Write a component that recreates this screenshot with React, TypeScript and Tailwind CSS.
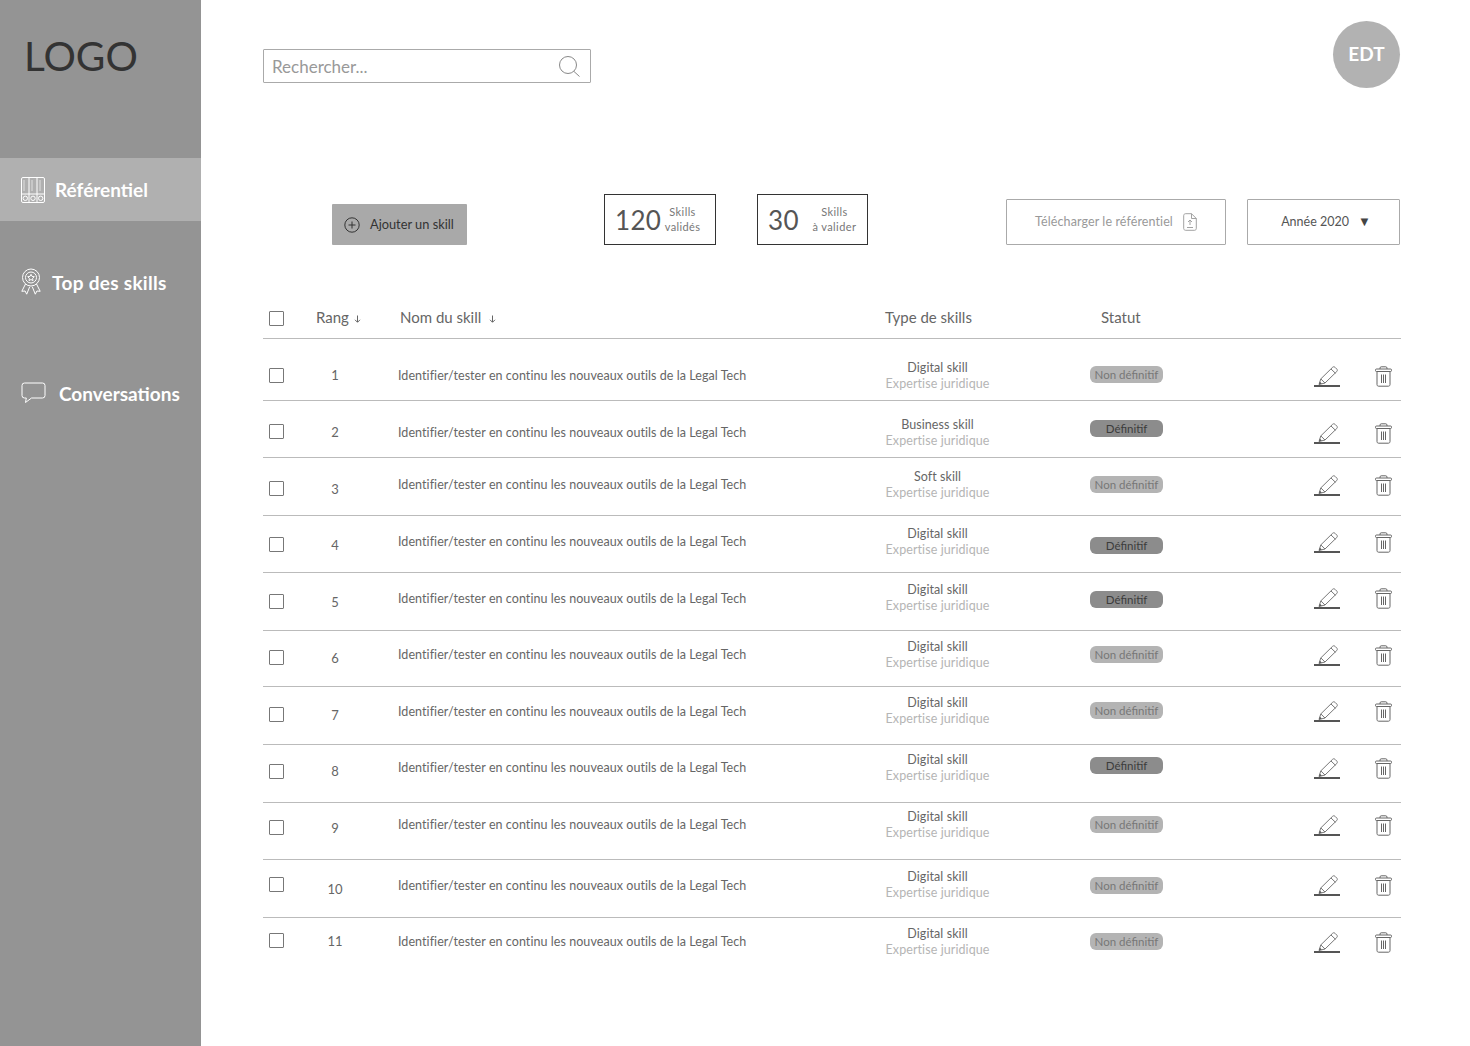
const font = "font-['Lato','Noto_Sans',sans-serif]";

interface Row {
  rank: number;
  height: number;
  check: number;
  rankY: number;
  nameY: number;
  typeY: number;
  pillY: number;
  iconY: number;
  type: string;
  final: boolean;
}

const rows: Row[] = [
  { rank: 1, height: 62, check: 29, rankY: 28, nameY: 29, typeY: 20.5, pillY: 27, iconY: 27, type: "Digital skill", final: false },
  { rank: 2, height: 57, check: 23, rankY: 23, nameY: 24, typeY: 15.5, pillY: 19, iconY: 22, type: "Business skill", final: true },
  { rank: 3, height: 58, check: 23, rankY: 23, nameY: 19, typeY: 10.5, pillY: 18, iconY: 17, type: "Soft skill", final: false },
  { rank: 4, height: 57, check: 21, rankY: 21, nameY: 18, typeY: 9.5, pillY: 21, iconY: 16, type: "Digital skill", final: true },
  { rank: 5, height: 58, check: 21, rankY: 21, nameY: 18, typeY: 8.5, pillY: 18, iconY: 15, type: "Digital skill", final: true },
  { rank: 6, height: 56, check: 19, rankY: 19, nameY: 16, typeY: 7.5, pillY: 15, iconY: 14, type: "Digital skill", final: false },
  { rank: 7, height: 58, check: 20, rankY: 20, nameY: 17, typeY: 7.5, pillY: 15, iconY: 14, type: "Digital skill", final: false },
  { rank: 8, height: 58, check: 19, rankY: 18, nameY: 15, typeY: 6.5, pillY: 12, iconY: 13, type: "Digital skill", final: true },
  { rank: 9, height: 57, check: 17, rankY: 17, nameY: 14, typeY: 5.5, pillY: 13, iconY: 12, type: "Digital skill", final: false },
  { rank: 10, height: 58, check: 17, rankY: 21, nameY: 18, typeY: 8.5, pillY: 17, iconY: 15, type: "Digital skill", final: false },
  { rank: 11, height: 57, check: 15, rankY: 15, nameY: 16, typeY: 7.5, pillY: 15, iconY: 14, type: "Digital skill", final: false },
];

function BinderIcon() {
  return (
    <svg width="26" height="28" viewBox="0 0 26 28" fill="none" stroke="#fff" strokeWidth="1" className="shrink-0">
      <rect x="1.5" y="1.5" width="23" height="25" rx="1.5" />
      <path d="M9 1.500v25M17 1.500v25M1.500 18h23" />
      <path d="M4 4v11M12 4v11M20 4v11" opacity="0.6" />
      <circle cx="5.300" cy="22.300" r="2.200" />
      <circle cx="13" cy="22.300" r="2.200" />
      <circle cx="20.700" cy="22.300" r="2.200" />
    </svg>
  );
}

function AwardIcon() {
  return (
    <svg width="20" height="28" viewBox="0 0 20 28" fill="none" stroke="#fff" strokeWidth="1" className="shrink-0">
      <circle cx="10" cy="9.500" r="8.500" />
      <circle cx="10" cy="9.500" r="5.500" />
      <path d="M10 6.300l1 2.100 2.300.3-1.700 1.600.4 2.300-2-1.100-2 1.100.4-2.300-1.700-1.600 2.300-.3z" />
      <path d="M4.500 16l-3.700 7.300 3.300-.3 1.600 3.200 3-7.400M15.500 16l3.700 7.300-3.300-.3-1.600 3.200-3-7.400" />
    </svg>
  );
}

function BubbleIcon() {
  return (
    <svg width="25" height="22" viewBox="0 0 25 22" fill="none" stroke="#fff" strokeWidth="1" className="shrink-0">
      <path d="M3.500 1h18a2.500 2.500 0 0 1 2.500 2.500v10a2.500 2.500 0 0 1-2.500 2.500H10.500l-6 4.500 .8-4.500H3.500A2.500 2.500 0 0 1 1 13.500v-10A2.500 2.500 0 0 1 3.500 1z" />
    </svg>
  );
}

function PencilIcon() {
  return (
    <svg width="26" height="21" viewBox="0 0 26 21" fill="none" className="shrink-0">
      <path d="M5 18.500l1.800-5.600L18.600 1.300c.7-.7 1.700-.7 2.400 0l1.800 1.800c.7.700.7 1.700 0 2.400L11 17z" stroke="#777" strokeWidth="1" />
      <path d="M17 3l4.500 4.300M6.800 12.900l4.200 4.100" stroke="#777" strokeWidth="1" />
      <path d="M5 18.500l.9-2.800 1.900 1.900z" fill="#555" />
      <path d="M0 20h26" stroke="#555" strokeWidth="2" />
    </svg>
  );
}

function TrashIcon() {
  return (
    <svg width="17" height="21" viewBox="0 0 17 21" fill="none" stroke="#666" strokeWidth="1" className="shrink-0">
      <path d="M5 3V2c0-.7.500-1.200 1.200-1.200h4.600c.7 0 1.200.5 1.200 1.200v1" />
      <rect x="0.500" y="3" width="16" height="2.500" rx="1" />
      <path d="M2 5.500v13c0 1 .6 1.700 1.600 1.700h9.800c1 0 1.600-.7 1.600-1.700v-13" />
      <path d="M6.500 8.500v8.500M8.500 8.500v8.500M10.500 8.500v8.500" />
    </svg>
  );
}

function SortArrow() {
  return (
    <svg width="7" height="8" viewBox="0 0 7 8" fill="none" stroke="#666" strokeWidth="1" className="mt-[3px] shrink-0">
      <path d="M3.500 0.500v6.500M1 4.800l2.500 2.500L6 4.800" />
    </svg>
  );
}

function Checkbox() {
  return <div className="h-[15px] w-[15px] rounded-[1px] border border-[#777] bg-white" />;
}

function SideItem({ icon, label, className }: { icon: React.ReactNode; label: string; className: string }) {
  return (
    <div className={`flex items-center font-bold text-white ${className}`}>
      {icon}
      <span className="pt-[2px]">{label}</span>
    </div>
  );
}

function Stat({ value, line1, line2, className, textClass }: { value: string; line1: string; line2: string; className: string; textClass: string }) {
  return (
    <div className={`flex h-[51px] items-center border border-[#333] bg-white ${className}`}>
      <span className="text-[26px] leading-none tracking-[0.3px] text-[#555]">{value}</span>
      <div className={`flex-1 pb-[2px] text-center text-[11px] leading-[15px] tracking-[0.4px] text-[#777] ${textClass}`}>
        <div>{line1}</div>
        <div>{line2}</div>
      </div>
    </div>
  );
}

function TableRow({ row }: { row: Row }) {
  return (
    <div className="flex items-start border-b border-[#bbb] last:border-b-0" style={{ height: row.height }}>
      <div className="ml-[6px] w-[15px]" style={{ marginTop: row.check }}>
        <Checkbox />
      </div>
      <div className="ml-[13px] w-[76px] text-center text-[13px] leading-4 text-[#666]" style={{ marginTop: row.rankY }}>
        {row.rank}
      </div>
      <div className="ml-[25px] w-[380px] text-[12.5px] leading-4 tracking-[0.06px] text-[#666]" style={{ marginTop: row.nameY }}>
        Identifier/tester en continu les nouveaux outils de la Legal Tech
      </div>
      <div className="ml-[62px] w-[195px] text-center text-[12.5px] leading-[16.500px] tracking-[0.08px]" style={{ marginTop: row.typeY }}>
        <div className="text-[#666]">{row.type}</div>
        <div className="text-[#b5b5b5]">Expertise juridique</div>
      </div>
      <div className="ml-[55px] w-[73px]" style={{ marginTop: row.pillY }}>
        <div
          className={
            row.final
              ? "h-[17px] rounded-[6px] bg-[#8c8c8c] text-center text-[11.500px] leading-[17px] text-[#3c3c3c]"
              : "h-[17px] rounded-[6px] bg-[#b4b4b4] text-center text-[11.500px] leading-[17px] text-[#777]"
          }
        >
          {row.final ? "Définitif" : "Non définitif"}
        </div>
      </div>
      <div className="ml-[151px] flex w-[78px] items-center justify-between" style={{ marginTop: row.iconY }}>
        <PencilIcon />
        <TrashIcon />
      </div>
    </div>
  );
}

export default function App() {
  return (
    <div className={`flex h-[1046px] w-[1470px] overflow-hidden bg-white ${font}`}>
      <aside className="h-full w-[201px] shrink-0 bg-[#949494]">
        <div className="pl-[24px] pt-[31px] text-[40.500px] leading-[50px] text-[#333]">LOGO</div>
        <SideItem
          icon={<BinderIcon />}
          label="Référentiel"
          className="mt-[77px] h-[63px] gap-[9px] bg-[#b0b0b0] pl-[20px] text-[19px]"
        />
        <SideItem
          icon={<AwardIcon />}
          label="Top des skills"
          className="mt-[45px] h-[32px] gap-[11px] pl-[21px] text-[19px] tracking-[0.3px]"
        />
        <SideItem icon={<BubbleIcon />} label="Conversations" className="mt-[79px] h-[32px] gap-[13px] pl-[21px] text-[19px]" />
      </aside>

      <main className="flex-1 pl-[62px] pr-[69px]">
        <div className="flex items-start justify-between">
          <div className="mt-[49px] flex h-[34px] w-[328px] items-center justify-between rounded-[1px] border border-[#aaa] pl-[8px] pr-[9px] text-[17px] text-[#999]">
            <span className="pt-[1px]">Rechercher...</span>
            <svg width="23" height="23" viewBox="0 0 23 23" fill="none" stroke="#888" strokeWidth="1">
              <circle cx="10" cy="10" r="8.500" />
              <path d="M16 16.500l5.500 5" />
            </svg>
          </div>
          <div className="mr-px mt-[21px] flex h-[67px] w-[67px] items-center justify-center rounded-full bg-[#b2b2b2] text-[19px] font-bold text-white">
            EDT
          </div>
        </div>

        <div className="mt-[106px] flex items-start">
          <div className="ml-[69px] mt-[10px] flex h-[41px] w-[135px] items-center gap-[10px] rounded-[1px] bg-[#a9a9a9] pl-[12px] text-[12.800px] text-[#333]">
            <svg width="16" height="16" viewBox="0 0 16 16" fill="none" stroke="#333" strokeWidth="1">
              <circle cx="8" cy="8" r="7.200" />
              <path d="M8 4.500v7M4.500 8h7" />
            </svg>
            <span>Ajouter un skill</span>
          </div>
          <Stat value="120" line1="Skills" line2="validés" textClass="" className="ml-[137px] w-[112px] pl-[10px] pr-[11px]" />
          <Stat value="30" line1="Skills" line2="à valider" textClass="pl-[3px]" className="ml-[41px] w-[111px] pl-[10px]" />
          <div className="ml-[138px] mt-[5px] flex h-[46px] w-[220px] items-center justify-center gap-[10px] rounded-[1px] border border-[#aaa] text-[12.500px] tracking-[0.1px] text-[#999]">
            <span>Télécharger le référentiel</span>
            <svg width="14" height="18" viewBox="0 0 14 18" fill="none" stroke="#999" strokeWidth="0.9">
              <path d="M2.500 0.700h6l4.800 4.800v10c0 1-.7 1.800-1.700 1.800H2.500c-1 0-1.800-.8-1.800-1.800V2.500c0-1 .8-1.800 1.800-1.800z" />
              <path d="M8.500 0.700v4.800h4.800M7 12V7M5 9l2-2 2 2M4 14.500h6" />
            </svg>
          </div>
          <div className="ml-[21px] mt-[5px] flex h-[46px] w-[153px] items-center justify-center gap-[9px] rounded-[1px] border border-[#aaa] pl-[5px] text-[12.500px] text-[#555]">
            <span>Année 2020</span>
            <span className="text-[13px] text-[#444]">▼</span>
          </div>
        </div>

        <div className="mt-[50px] flex h-[44px] w-[1138px] items-start border-b border-[#bbb] text-[15px] leading-[20px] text-[#666]">
          <div className="ml-[6px] mt-[16px]">
            <Checkbox />
          </div>
          <div className="ml-[32px] mt-[12px] flex w-[84px] items-center gap-[5px]">
            Rang <SortArrow />
          </div>
          <div className="mt-[12px] flex w-[485px] items-center gap-[8px]">
            Nom du skill <SortArrow />
          </div>
          <div className="mt-[12px] w-[216px]">Type de skills</div>
          <div className="mt-[12px]">Statut</div>
        </div>

        <div className="w-[1138px]">
          {rows.map((row) => (
            <TableRow key={row.rank} row={row} />
          ))}
        </div>
      </main>
    </div>
  );
}
